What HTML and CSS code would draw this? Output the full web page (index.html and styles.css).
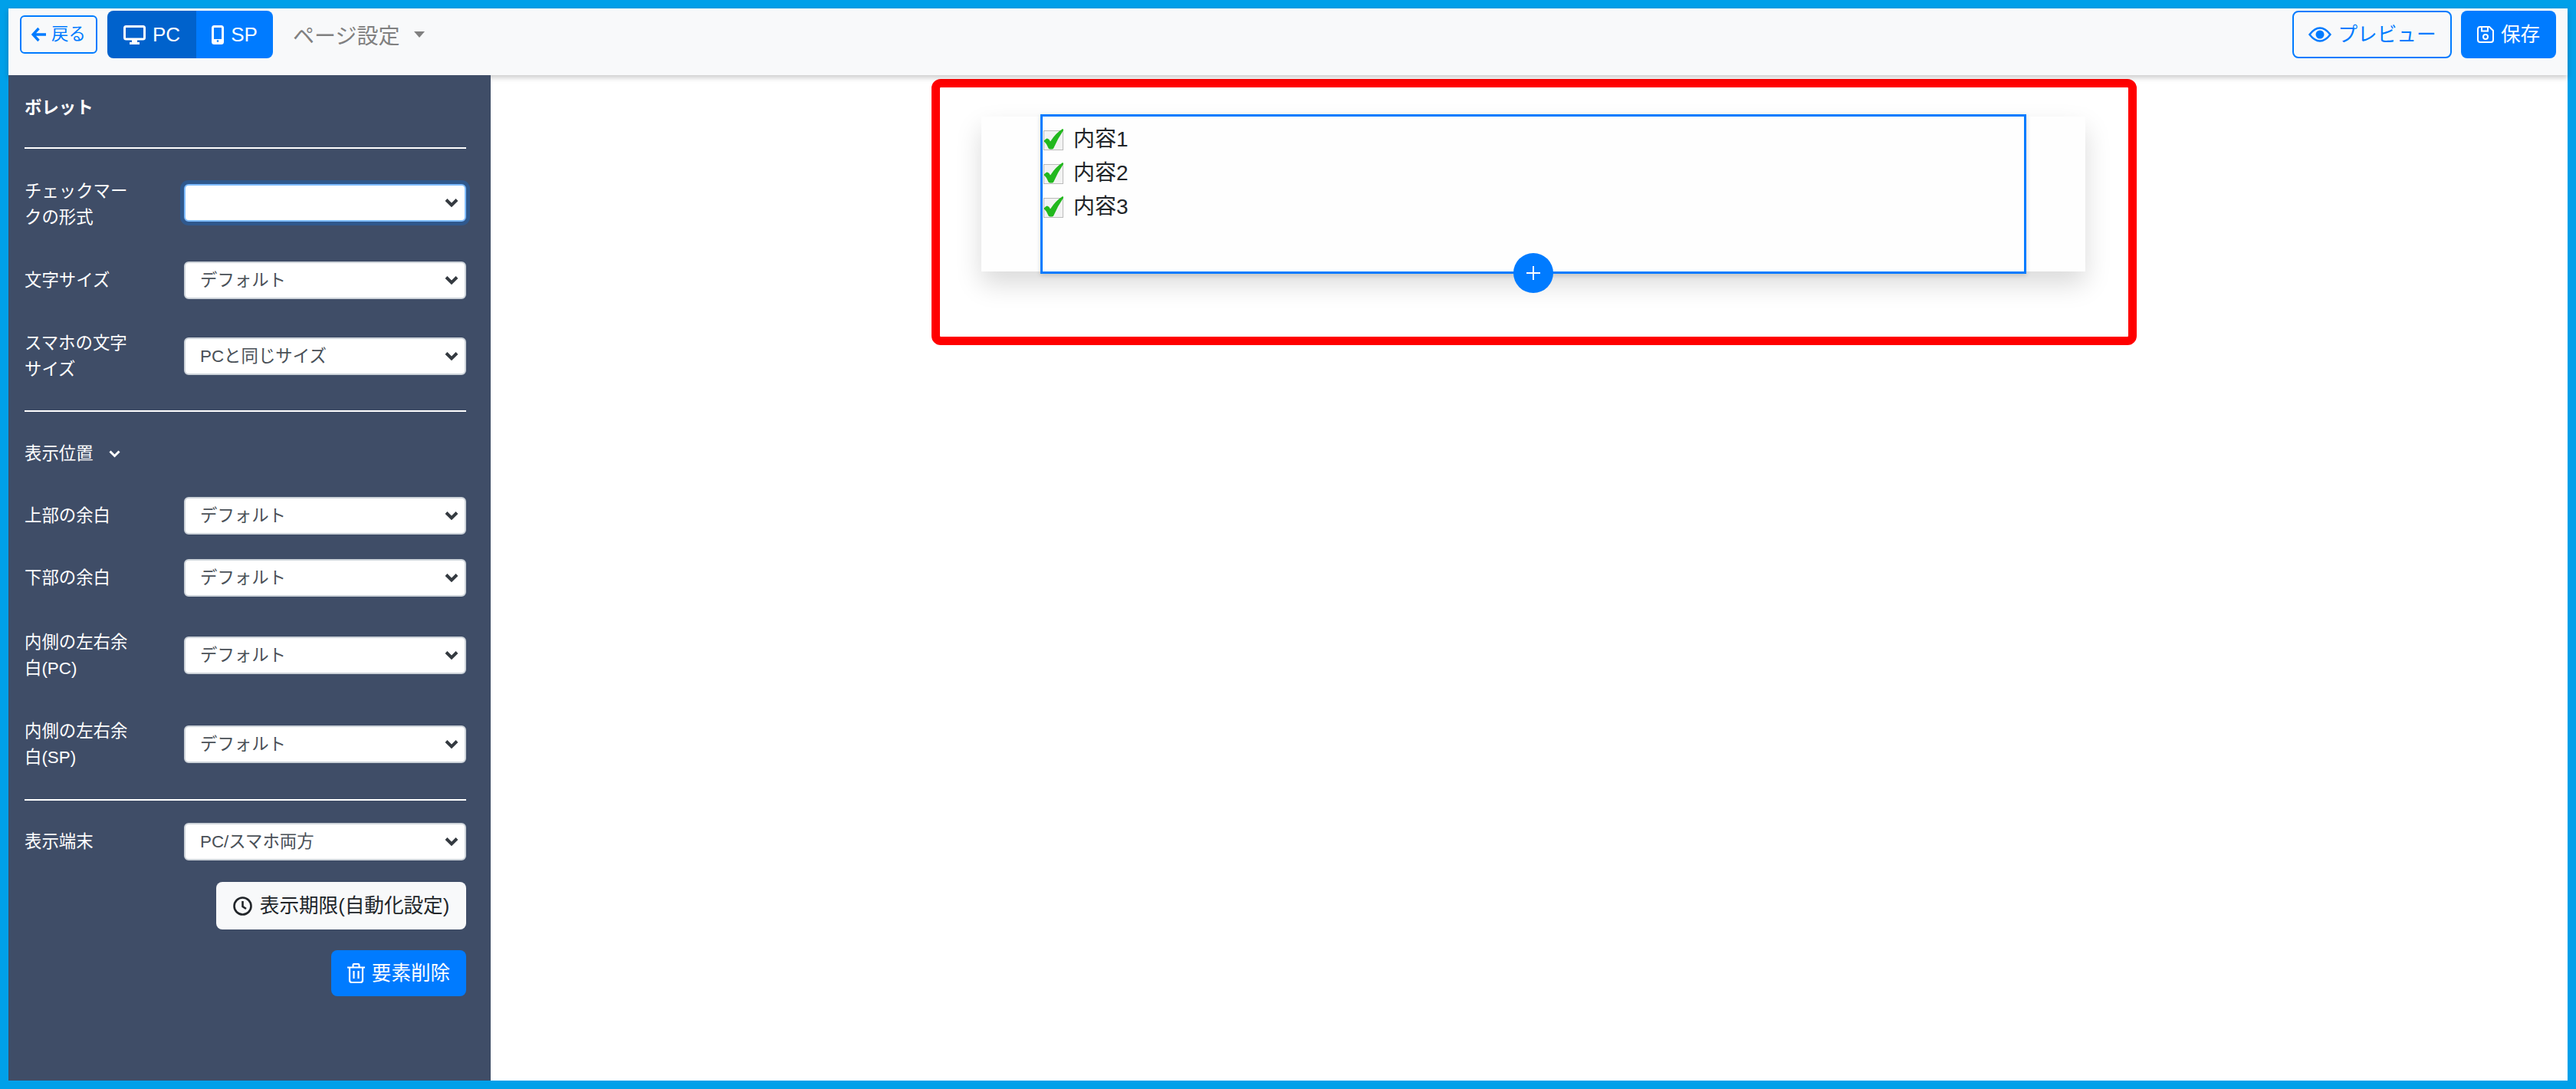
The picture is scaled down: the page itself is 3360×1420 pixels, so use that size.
FILE: index.html
```html
<!DOCTYPE html>
<html lang="ja">
<head>
  <meta charset="UTF-8" />
  <title>ページ編集</title>
  <link rel="stylesheet" href="styles.css">
</head>
<body>
  <svg class="defs" width="0" height="0">
    <symbol id="tick-box" viewBox="0 0 26 28">
      <rect x="0.5" y="2.5" width="25" height="25" fill="#f3f3f3" stroke="#bbb" />
      <path d="M0.500 16 Q3 12.500 5 12.500 Q7.500 13 9 16.500 Q16 5.500 25 0 L26.500 1.300 Q19 12 13 25.700 Q10 27.500 6.800 25.700 Q5 20 0.500 16 Z" fill="#22b81e" />
    </symbol>
  </svg>

  <div class="frame">
    <header class="topbar">
      <div class="topbar-left">
        <button class="btn btn-back">
          <svg width="20" height="20" viewBox="0 0 20 20"><path d="M9.500 2 2 10l7.500 8M2.500 10H19" fill="none" stroke="currentColor" stroke-width="3.400" /></svg>
          戻る
        </button>
        <div class="device-switch">
          <button class="btn device active">
            <svg width="29" height="25" viewBox="0 0 29 25"><rect x="1.500" y="1.500" width="26" height="16.500" rx="2" fill="none" stroke="currentColor" stroke-width="3" /><path d="M11 18h7v4h3v3H8v-3h3z" fill="currentColor" /></svg>
            PC
          </button>
          <button class="btn device">
            <svg width="16" height="25" viewBox="0 0 16 25"><rect x="1.500" y="1.500" width="13" height="22" rx="2" fill="none" stroke="currentColor" stroke-width="3" /><rect x="2" y="18" width="12" height="5" fill="currentColor" /><circle cx="8" cy="20.500" r="1.300" fill="#007bff" /></svg>
            SP
          </button>
        </div>
        <div class="page-menu">ページ設定<span class="caret"></span></div>
      </div>
      <div class="topbar-right">
        <button class="btn btn-outline">
          <svg width="30" height="20" viewBox="0 0 30 20"><path d="M1.500 10Q8 1.500 15 1.500T28.500 10Q22 18.500 15 18.500T1.500 10Z" fill="none" stroke="currentColor" stroke-width="2.400" /><circle cx="15" cy="10" r="5.500" fill="currentColor" /></svg>
          プレビュー
        </button>
        <button class="btn btn-primary btn-save">
          <svg width="22" height="22" viewBox="0 0 22 22"><path d="M1 4a3 3 0 0 1 3-3h12l5 5v12a3 3 0 0 1-3 3H4a3 3 0 0 1-3-3z" fill="none" stroke="currentColor" stroke-width="2" /><path d="M6 1.500v5h8v-5" fill="none" stroke="currentColor" stroke-width="2" /><circle cx="11" cy="14" r="3" fill="none" stroke="currentColor" stroke-width="2" /></svg>
          保存
        </button>
      </div>
    </header>

    <div class="workspace">
      <aside class="sidebar">
        <h2 class="side-title">ボレット</h2>
        <hr class="rule rule-first">

        <div class="field field-a">
          <label>チェックマークの形式</label>
          <select class="focused"><option></option></select>
        </div>
        <div class="field field-b">
          <label>文字サイズ</label>
          <select><option>デフォルト</option></select>
        </div>
        <div class="field field-b">
          <label>スマホの文字サイズ</label>
          <select><option>PCと同じサイズ</option></select>
        </div>
        <hr class="rule rule-second">

        <div class="section-toggle">
          表示位置
          <svg width="15" height="10" viewBox="0 0 15 10"><path d="M1.500 1.500 7.500 7.500 13.500 1.500" fill="none" stroke="#fff" stroke-width="3" /></svg>
        </div>
        <div class="field field-top">
          <label>上部の余白</label>
          <select><option>デフォルト</option></select>
        </div>
        <div class="field field-c">
          <label>下部の余白</label>
          <select><option>デフォルト</option></select>
        </div>
        <div class="field field-inner">
          <label>内側の左右余白(PC)</label>
          <select><option>デフォルト</option></select>
        </div>
        <div class="field field-d">
          <label>内側の左右余白(SP)</label>
          <select><option>デフォルト</option></select>
        </div>
        <hr class="rule rule-third">

        <div class="field field-e">
          <label>表示端末</label>
          <select><option>PC/スマホ両方</option></select>
        </div>
        <div class="side-actions">
          <button class="btn btn-light">
            <svg width="25" height="25" viewBox="0 0 25 25"><circle cx="12.500" cy="12.500" r="11" fill="none" stroke="currentColor" stroke-width="2.600" /><path d="M12.500 6v7l4.500 3" fill="none" stroke="currentColor" stroke-width="2.600" /></svg>
            表示期限(自動化設定)
          </button>
          <button class="btn btn-primary btn-delete">
            <svg width="23" height="26" viewBox="0 0 23 26"><path d="M0 5.500h23M7.500 5V2.500a1.500 1.500 0 0 1 1.500-1.500h5a1.500 1.500 0 0 1 1.500 1.500V5M3 5.500V22a3 3 0 0 0 3 3h11a3 3 0 0 0 3-3V5.500M8.500 10v10M14.500 10v10" fill="none" stroke="currentColor" stroke-width="2.200" /></svg>
            要素削除
          </button>
        </div>
      </aside>

      <main class="canvas">
        <div class="highlight">
          <section class="card">
            <div class="block">
              <ul class="ticks">
                <li><svg class="tick" width="26" height="28"><use href="#tick-box" /></svg>内容1</li>
                <li><svg class="tick" width="26" height="28"><use href="#tick-box" /></svg>内容2</li>
                <li><svg class="tick" width="26" height="28"><use href="#tick-box" /></svg>内容3</li>
              </ul>
              <button class="add-block">
                <svg width="20" height="20" viewBox="0 0 20 20"><path d="M10 1v18M1 10h18" stroke="#fff" stroke-width="2" /></svg>
              </button>
            </div>
          </section>
        </div>
      </main>
    </div>
  </div>
</body>
</html>
```

FILE: styles.css
```css
* {
  box-sizing: border-box;
}

body {
  margin: 0;
  font-family: "Liberation Sans", "Noto Sans CJK JP", sans-serif;
  color: #212529;
  background: #fff;
}

.defs {
  position: absolute;
}

.frame {
  display: flex;
  flex-direction: column;
  height: 100vh;
  border: 11px solid #00a0e9;
}

/* top bar */
.topbar {
  position: relative;
  z-index: 1;
  display: flex;
  justify-content: space-between;
  align-items: center;
  height: 87px;
  padding: 3px 15px 22px;
  background: #f8f9fa;
  box-shadow: 0 3px 7px rgba(0, 0, 0, 0.22);
}

.topbar-left,
.topbar-right {
  display: flex;
  align-items: center;
}

.btn {
  display: inline-flex;
  justify-content: center;
  align-items: center;
  gap: 11px;
  border: 0;
  border-radius: 8px;
  font-family: inherit;
  font-size: 25.6px;
  line-height: 1.5;
  cursor: pointer;
}

.btn-back {
  width: 101px;
  height: 50px;
  gap: 6px;
  padding: 0;
  margin-right: 13px;
  border: 2px solid #007bff;
  border-radius: 6px;
  background: transparent;
  color: #007bff;
  font-size: 22.4px;
}

.device-switch {
  display: flex;
  overflow: hidden;
  height: 62px;
  border-radius: 8px;
}

.device {
  width: 100px;
  height: 62px;
  gap: 9px;
  border-radius: 0;
  background: #007bff;
  color: #fff;
  font-size: 26px;
}

.device.active {
  width: 116px;
  background: #0062cc;
}

.page-menu {
  display: flex;
  align-items: center;
  margin-left: 26px;
  color: #808080;
  font-size: 28px;
}

.caret {
  margin-left: 19px;
  border-top: 8px solid #808080;
  border-left: 7px solid transparent;
  border-right: 7px solid transparent;
}

.btn-outline {
  width: 208px;
  height: 62px;
  gap: 9px;
  margin-right: 12px;
  border: 2px solid #007bff;
  background: transparent;
  color: #007bff;
}

.btn-primary {
  background: #007bff;
  color: #fff;
}

.btn-save {
  width: 124px;
  height: 62px;
  gap: 9px;
}

/* side panel */
.workspace {
  display: flex;
  flex: 1;
  min-height: 0;
}

.sidebar {
  position: relative;
  z-index: 2;
  flex: none;
  width: 629px;
  padding: 26px 32px 0 21px;
  background: #3f4d67;
  color: #fff;
  font-size: 22.4px;
  line-height: 1.5;
}

.side-title {
  margin: 0;
  font-size: 22.4px;
  font-weight: 700;
  line-height: 34px;
}

.rule {
  margin: 0;
  border: 0;
  border-top: 2px solid #fff;
}

.rule-first {
  margin-top: 34px;
}

.rule-second {
  margin-top: 37px;
}

.rule-third {
  margin-top: 38px;
}

.field {
  display: flex;
  align-items: center;
}

.field label {
  flex: none;
  width: 140px;
  margin-right: 68px;
}

.field select {
  flex: 1;
  height: 49px;
  padding: 0 40px 0 19px;
  border: 2px solid #ced4da;
  border-radius: 6px;
  appearance: none;
  background: #fff url("data:image/svg+xml,%3Csvg xmlns='http://www.w3.org/2000/svg' width='18' height='13' viewBox='0 0 18 13'%3E%3Cpath d='M2 2.500 9 9.500 16 2.500' fill='none' stroke='%23343a40' stroke-width='4'/%3E%3C/svg%3E") no-repeat right 8px center;
  color: #495057;
  font-family: inherit;
  font-size: 22.4px;
}

.field select.focused {
  margin-bottom: 4px;
  border-color: #80bdff;
  box-shadow: 0 0 0 5px rgba(0, 123, 255, 0.25);
}

.field-a {
  margin-top: 39px;
}

.field-b {
  margin-top: 41px;
}

.field-top {
  margin-top: 39px;
}

.field-c {
  margin-top: 32px;
}

.field-inner {
  margin-top: 43px;
}

.field-d {
  margin-top: 49px;
}

.field-e {
  margin-top: 29px;
}

.section-toggle {
  display: flex;
  align-items: center;
  gap: 20px;
  margin-top: 38px;
}

.side-actions {
  display: flex;
  flex-direction: column;
  align-items: flex-end;
  gap: 27px;
  margin-top: 28px;
}

.btn-light {
  width: 326px;
  height: 62px;
  gap: 10px;
  background: #f8f9fa;
  color: #212529;
}

.btn-delete {
  width: 176px;
  height: 60px;
  gap: 9px;
}

/* preview area */
.canvas {
  flex: 1;
  padding: 5px 0 0 575px;
  background: #fff;
}

.highlight {
  width: 1572px;
  height: 347px;
  padding: 38px 56px 0 54px;
  border: 11px solid #f00;
  border-radius: 12px;
}

.card {
  display: flow-root;
  height: 202px;
  padding: 0 77px;
  background: #fefefe;
  box-shadow: 0 16px 32px rgba(0, 0, 0, 0.15);
}

.block {
  position: relative;
  height: 208px;
  margin: -3px 0;
  padding: 8px 1px 0;
  border: 3px solid #007bff;
  box-shadow: 0 2px 6px rgba(0, 0, 0, 0.15);
}

.ticks {
  margin: 0;
  padding: 0;
  list-style: none;
  font-size: 28px;
  line-height: 44px;
}

.ticks li {
  display: flex;
  align-items: center;
  height: 44px;
}

.tick {
  flex: none;
  margin-right: 13px;
}

.add-block {
  position: absolute;
  left: 614px;
  bottom: -28px;
  display: flex;
  justify-content: center;
  align-items: center;
  width: 52px;
  height: 52px;
  padding: 0;
  border: 0;
  border-radius: 50%;
  background: #007bff;
}
```
